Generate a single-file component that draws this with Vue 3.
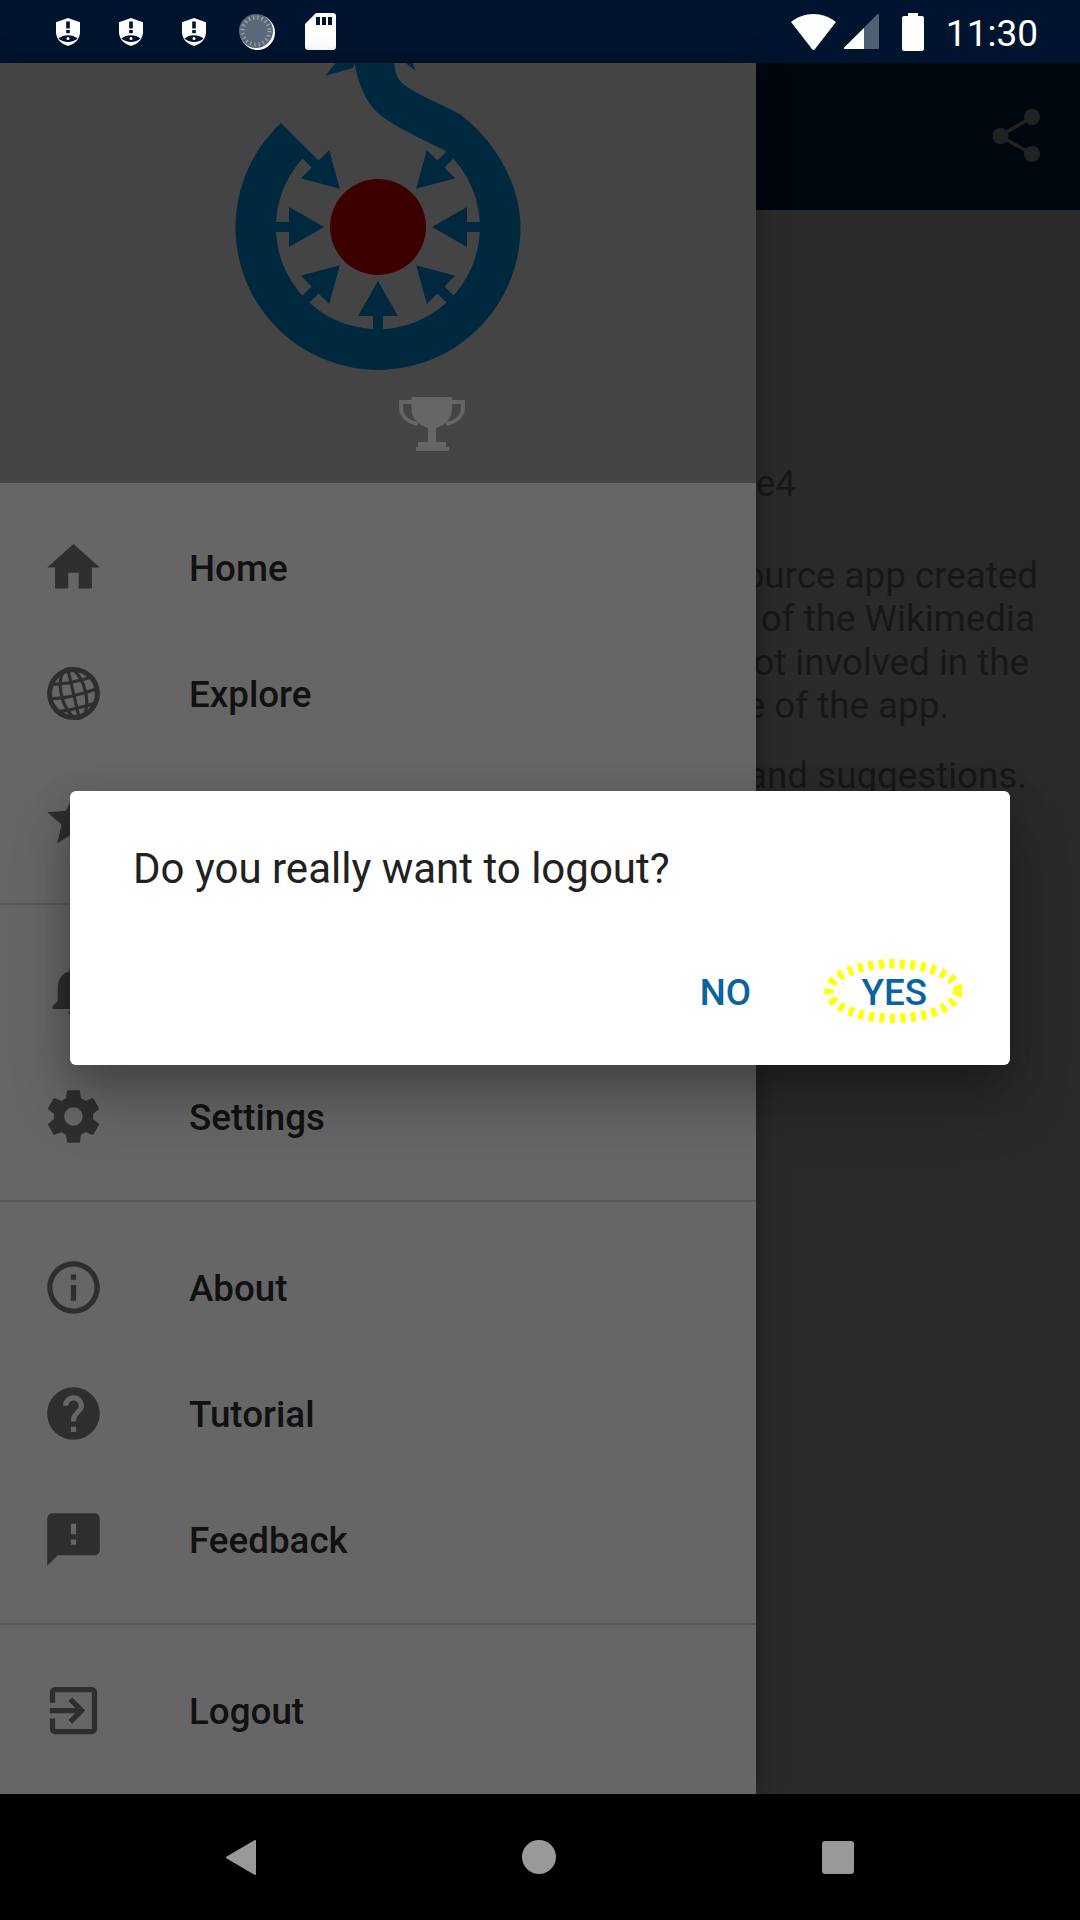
<template>
  <div class="phone">
    <header class="status-bar">
      <div class="status-left">
        <svg v-for="n in 3" :key="n" class="shield" viewBox="0 0 24 28">
          <path d="M12 0L24 4.200V14C24 21 19 26 12 28C5 26 0 21 0 14V4.200Z" fill="#fff" />
          <rect x="10.200" y="3.500" width="3.600" height="7" fill="#00142f" />
          <rect x="10.200" y="12" width="3.600" height="3.200" fill="#00142f" />
          <path d="M2.500 20.500C7 16 17 16 21.500 20.500C17 25 7 25 2.500 20.500Z" fill="#00142f" />
          <circle cx="12" cy="20.500" r="1.500" fill="#fff" />
        </svg>
        <svg class="sync" viewBox="0 0 36 36">
          <circle cx="18.500" cy="18.500" r="17.500" fill="#fff" />
          <circle cx="17" cy="17" r="17" fill="#5a6a7a" />
          <circle cx="17" cy="17" r="13.500" fill="none" stroke="#9aa5b0" stroke-width="4" stroke-dasharray="1.300 3" />
        </svg>
        <svg class="sd" viewBox="0 0 31 37">
          <path d="M11 0H28C29.700 0 31 1.300 31 3V34C31 35.700 29.700 37 28 37H3C1.300 37 0 35.700 0 34V11Z" fill="#fff" />
          <rect x="11" y="4" width="4" height="8" fill="#00142f" />
          <rect x="17" y="4" width="4" height="8" fill="#00142f" />
          <rect x="23" y="4" width="4" height="8" fill="#00142f" />
        </svg>
      </div>
      <div class="status-right">
        <svg class="wifi" viewBox="0 0 45 36">
          <path d="M0 8C6 3 14 0 22.500 0S39 3 45 8L24 35C23 36.300 22 36.300 21 35Z" fill="#fff" />
        </svg>
        <svg class="signal" viewBox="0 0 35 35">
          <path d="M34 0C34.600 0 35 .4 35 1V34C35 34.600 34.600 35 34 35H1C0 35 -.3 34 .3 33.400L33.400 .3C33.600 .1 33.800 0 34 0Z" fill="#4f6072" />
          <path d="M20 14V35H1C0 35 -.3 34 .3 33.400Z" fill="#fff" />
        </svg>
        <svg class="battery" viewBox="0 0 22 38">
          <path d="M6 0H16V3H20C21.100 3 22 3.900 22 5V36C22 37.100 21.100 38 20 38H2C.9 38 0 37.100 0 36V5C0 3.900 .9 3 2 3H6Z" fill="#fff" />
        </svg>
        <span class="clock">11:30</span>
      </div>
    </header>

    <main class="middle">
      <div class="page">
        <div class="toolbar">
          <svg class="share" viewBox="0 0 47 53">
            <path d="M39 8L7 27L39 45" fill="none" stroke="#222" stroke-width="3.500" />
            <circle cx="39" cy="8" r="8" fill="#222" />
            <circle cx="7.500" cy="27" r="8" fill="#222" />
            <circle cx="39" cy="45" r="8" fill="#222" />
          </svg>
        </div>
        <div class="about">
          <div
            v-for="line in aboutLines"
            :key="line.text"
            class="about-line"
            :class="line.cls"
            :style="{ width: line.end + 'px' }"
          >{{ line.text }}</div>
        </div>
      </div>

      <aside class="drawer">
        <div class="drawer-head">
          <svg class="logo" viewBox="235 63 286 307">
            <path
              fill="#00283f"
              d="M281 123A142.500 142.500 0 1 0 520.500 227C520.500 190 500 145 461 115C445 105 415 95 401 82C396 76 395 70 394 63L354.500 63C357 80 365 100 375 110C388 124 420 138 444 150L450 155A102 102 0 1 1 309.500 151.500Z"
            />
            <path fill="#00283f" d="M325.400 75.700L335.700 63H354.700L353 68ZM405.600 63L415.600 70.700L412.500 63Z" />
            <polygon
              v-for="angle in arrowAngles"
              :key="angle"
              fill="#00283f"
              points="0,54 20,89 5,89 5,104 -5,104 -5,89 -20,89"
              :transform="`translate(378 227) rotate(${angle})`"
            />
            <circle cx="378" cy="227" r="48" fill="#3d0000" />
          </svg>
          <svg class="trophy" viewBox="0 0 66 54">
            <path
              fill="none"
              stroke="#666"
              stroke-width="4"
              d="M13 5H2V10C2 19 9 25 19 27M53 5H64V10C64 19 57 25 47 27"
            />
            <path
              fill="#666"
              d="M12.500 0H53V12C53 22 46 28 37 31V45H47V50H50V54H17V50H19V45H29V31C20 28 12.500 22 12.500 12Z"
            />
          </svg>
        </div>

        <nav class="menu">
          <div v-for="(group, i) in menuGroups" :key="i" class="menu-group">
            <div v-for="item in group" :key="item.label" class="menu-item">
              <svg v-if="item.label === 'Explore'" class="menu-icon" viewBox="0 0 24 24">
                <g fill="none" stroke="#2e2e2e">
                  <circle cx="12" cy="12" r="9.100" stroke-width="1.900" />
                  <g stroke-width="1.200">
                    <ellipse cx="12" cy="12" rx="4.600" ry="9.700" transform="rotate(-14 12 12)" />
                    <path d="M3.500 8.500C9 8.500 15 7 19.500 5.500M2.800 14C9 14 16 12 21.500 10M5.500 19C10 18.500 16 17 20.500 15.500" />
                    <path d="M9.800 2.500L14.200 21.500" />
                  </g>
                </g>
              </svg>
              <svg v-else class="menu-icon" viewBox="0 0 24 24">
                <path :d="item.icon" fill="#2e2e2e" />
              </svg>
              <span class="menu-label">{{ item.label }}</span>
            </div>
          </div>
        </nav>
      </aside>

      <div class="dialog">
        <p class="dialog-text">Do you really want to logout?</p>
        <div class="dialog-actions">
          <span class="dialog-btn">NO</span>
          <span class="dialog-btn yes">
            YES
            <svg class="highlight" viewBox="0 0 139 64">
              <ellipse cx="69.500" cy="32" rx="64.500" ry="27.200" fill="none" stroke="#ffff00" stroke-width="9.500" stroke-dasharray="5 5.500" />
            </svg>
          </span>
        </div>
      </div>
    </main>

    <footer class="nav-bar">
      <svg class="nav-back" viewBox="0 0 30 35">
        <path d="M29 0C29.600 0 30 .4 30 1V34C30 34.600 29.600 35 29 35C28.800 35 28.600 34.900 28.400 34.800L.7 18.500C-.2 18 -.2 17 .7 16.500L28.400 .2C28.600 .1 28.800 0 29 0Z" fill="#999" />
      </svg>
      <span class="nav-home"></span>
      <span class="nav-recent"></span>
    </footer>
  </div>
</template>

<script setup>
const arrowAngles = [0, 45, 90, 135, 225, 270, 315]

const aboutLines = [
  { text: 'debug-master~f0e31e4', end: 796, cls: 'first' },
  { text: 'free and open source app created', end: 1038, cls: 'para' },
  { text: 'by volunteers of the Wikimedia', end: 1035 },
  { text: 'Foundation is not involved in the', end: 1029 },
  { text: 'or maintenance of the app.', end: 949 },
  { text: 'your bugs and suggestions.', end: 1027, cls: 'para-small' },
]

const icons = {
  home: 'M10 20v-6h4v6h5v-8h3L12 3 2 12h3v8z',
  star: 'M12 17.27L18.18 21l-1.64-7.03L22 9.24l-7.19-.61L12 2 9.19 8.63 2 9.24l5.46 4.73L5.82 21z',
  bell: 'M12 22c1.1 0 2-.9 2-2h-4c0 1.1.9 2 2 2zm6-6v-5c0-3.07-1.64-5.64-4.5-6.32V4c0-.83-.67-1.5-1.5-1.5s-1.5.67-1.5 1.5v.68C7.63 5.36 6 7.92 6 11v5l-2 2v1h16v-1l-2-2z',
  settings: 'M19.43 12.98c.04-.32.07-.64.07-.98s-.03-.66-.07-.98l2.11-1.65c.19-.15.24-.42.12-.64l-2-3.46c-.12-.22-.39-.3-.61-.22l-2.49 1c-.52-.4-1.08-.73-1.69-.98l-.38-2.65C14.46 2.18 14.25 2 14 2h-4c-.25 0-.46.18-.49.42l-.38 2.65c-.61.25-1.17.59-1.69.98l-2.49-1c-.23-.09-.49 0-.61.22l-2 3.46c-.13.22-.07.49.12.64l2.11 1.65c-.04.32-.07.65-.07.98s.03.66.07.98l-2.11 1.65c-.19.15-.24.42-.12.64l2 3.46c.12.22.39.3.61.22l2.49-1c.52.4 1.08.73 1.69.98l.38 2.65c.03.24.24.42.49.42h4c.25 0 .46-.18.49-.42l.38-2.65c.61-.25 1.17-.59 1.69-.98l2.49 1c.23.09.49 0 .61-.22l2-3.46c.12-.22.07-.49-.12-.64l-2.11-1.65zM12 15.5c-1.93 0-3.5-1.57-3.5-3.5s1.57-3.5 3.5-3.5 3.5 1.57 3.5 3.5-1.57 3.5-3.5 3.5z',
  info: 'M11 17h2v-6h-2v6zm1-15C6.48 2 2 6.48 2 12s4.48 10 10 10 10-4.48 10-10S17.52 2 12 2zm0 18c-4.41 0-8-3.59-8-8s3.59-8 8-8 8 3.59 8 8-3.59 8-8 8zM11 9h2V7h-2v2z',
  help: 'M12 2C6.48 2 2 6.48 2 12s4.48 10 10 10 10-4.48 10-10S17.52 2 12 2zm1 17h-2v-2h2v2zm2.07-7.75l-.9.92C13.45 12.9 13 13.5 13 15h-2v-.5c0-1.1.45-2.1 1.17-2.83l1.24-1.26c.37-.36.59-.86.59-1.41 0-1.1-.9-2-2-2s-2 .9-2 2H8c0-2.21 1.79-4 4-4s4 1.79 4 4c0 .88-.36 1.68-.93 2.25z',
  feedback: 'M20 2H4c-1.1 0-1.99.9-1.99 2L2 22l4-4h14c1.1 0 2-.9 2-2V4c0-1.1-.9-2-2-2zm-7 12h-2v-2h2v2zm0-4h-2V6h2v4z',
  logout: 'M10.09 15.59L11.5 17l5-5-5-5-1.41 1.41L12.67 11H3v2h9.67l-2.58 2.59zM19 3H5c-1.11 0-2 .9-2 2v4h2V5h14v14H5v-4H3v4c0 1.1.89 2 2 2h14c1.1 0 2-.9 2-2V5c0-1.1-.9-2-2-2z',
}

const menuGroups = [
  [
    { label: 'Home', icon: icons.home },
    { label: 'Explore' },
    { label: 'Favorites', icon: icons.star },
  ],
  [
    { label: 'Notifications', icon: icons.bell },
    { label: 'Settings', icon: icons.settings },
  ],
  [
    { label: 'About', icon: icons.info },
    { label: 'Tutorial', icon: icons.help },
    { label: 'Feedback', icon: icons.feedback },
  ],
  [{ label: 'Logout', icon: icons.logout }],
]
</script>

<style>
html,
body {
  margin: 0;
  background: #000;
}
</style>

<style scoped>
.phone {
  width: 1080px;
  height: 1920px;
  display: flex;
  flex-direction: column;
  overflow: hidden;
  font-family: Roboto, sans-serif;
}

.status-bar {
  height: 63px;
  flex: none;
  background: #00142f;
  display: flex;
  justify-content: space-between;
  align-items: center;
  padding: 0 42px 0 56px;
}

.status-left,
.status-right {
  display: flex;
  align-items: center;
}

.shield {
  width: 24px;
  height: 28px;
  margin-right: 39px;
}

.sync {
  width: 36px;
  height: 36px;
  margin: 0 30px 0 -6px;
}

.sd {
  width: 31px;
  height: 37px;
}

.wifi {
  width: 45px;
  height: 36px;
  margin-right: 8px;
}

.signal {
  width: 35px;
  height: 35px;
  margin-right: 23px;
}

.battery {
  width: 22px;
  height: 38px;
  margin-right: 22px;
}

.clock {
  color: #fff;
  font-size: 37px;
  padding-top: 3px;
}

.middle {
  flex: 1;
  position: relative;
  min-height: 0;
}

.page {
  height: 100%;
  background: #2a2a2a;
}

.toolbar {
  height: 147px;
  background: #00070f;
  display: flex;
  justify-content: flex-end;
  padding: 46px 40px 0 0;
  box-sizing: border-box;
}

.share {
  width: 47px;
  height: 53px;
}

.about {
  color: #171717;
  font-size: 36.750px;
  line-height: 43.300px;
  white-space: nowrap;
  text-align: right;
}

.about-line.first {
  margin-top: 252px;
}

.about-line.para {
  margin-top: 48.700px;
}

.about-line.para-small {
  margin-top: 26.700px;
}

.drawer {
  position: absolute;
  left: 0;
  top: 0;
  bottom: 0;
  width: 756px;
  background: #666;
  box-shadow: 0 0 24px rgba(0, 0, 0, 0.35);
}

.drawer-head {
  height: 420px;
  background: #444;
  overflow: hidden;
  position: relative;
}

.logo {
  display: block;
  width: 286px;
  height: 307px;
  margin-left: 235px;
}

.trophy {
  position: absolute;
  left: 399px;
  top: 334px;
  width: 66px;
  height: 54px;
}

.menu {
  padding: 21px 0;
}

.menu-group + .menu-group {
  border-top: 2px solid #585858;
  margin-top: 21px;
  padding-top: 22px;
}

.menu-item {
  height: 126px;
  display: flex;
  align-items: center;
  padding-left: 42px;
}

.menu-icon {
  width: 63px;
  height: 63px;
  flex: none;
}

.menu-label {
  margin-left: 84px;
  padding-top: 2px;
  color: #111;
  font-size: 36.750px;
  font-weight: 500;
}

.dialog {
  position: absolute;
  left: 70px;
  top: 728px;
  width: 940px;
  height: 274px;
  box-sizing: border-box;
  background: #fff;
  border-radius: 6px;
  padding: 50px 83px 0 63px;
  box-shadow: 0 36px 60px rgba(0, 0, 0, 0.22), 0 12px 40px rgba(0, 0, 0, 0.2);
}

.dialog-text {
  margin: 0;
  color: #212121;
  font-size: 42px;
  line-height: 56px;
}

.dialog-actions {
  display: flex;
  justify-content: flex-end;
  gap: 110.500px;
  margin-top: 74px;
}

.dialog-btn {
  position: relative;
  color: #0a63a0;
  font-size: 36.750px;
  font-weight: 500;
  line-height: 44px;
}

.highlight {
  position: absolute;
  left: -38px;
  top: -12px;
  width: 139px;
  height: 64px;
}

.nav-bar {
  height: 126px;
  flex: none;
  background: #000;
  display: grid;
  grid-template-columns: 226px 30px 266px 34px 266px 32px;
  align-items: center;
}

.nav-back {
  grid-column: 2;
  width: 30px;
  height: 35px;
}

.nav-home {
  grid-column: 4;
  width: 34px;
  height: 34px;
  border-radius: 50%;
  background: #999;
}

.nav-recent {
  grid-column: 6;
  width: 32px;
  height: 33px;
  border-radius: 3px;
  background: #999;
}
</style>
